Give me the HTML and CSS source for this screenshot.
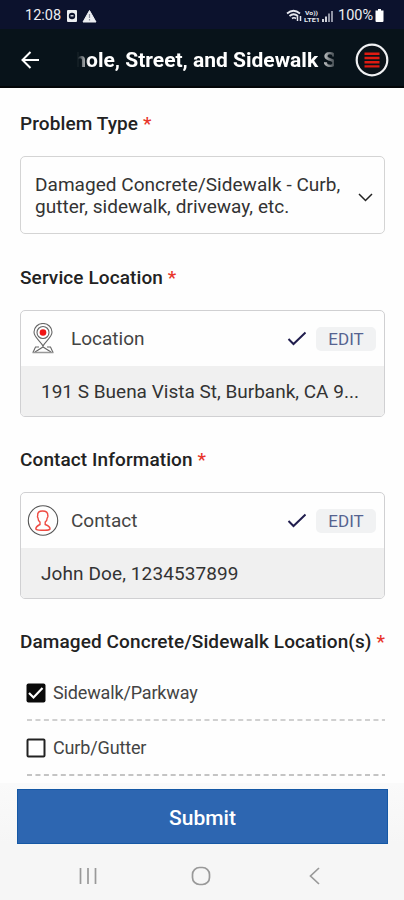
FILE: index.html
```html
<!DOCTYPE html>
<html lang="en">
<head>
  <meta charset="UTF-8" />
  <title>Service Request</title>
  <meta name="viewport" content="width=device-width, initial-scale=1.0" />
  <link rel="stylesheet" href="styles.css">
</head>
<body>
  <div class="status-bar">
    <span class="time">12:08</span>
    <svg class="status-left" width="32" height="14" viewBox="0 0 32 14">
      <rect x="1" y="1" width="10" height="12" rx="1" fill="#eceef2" />
      <circle cx="6" cy="7" r="3.2" fill="#0c122d" />
      <path d="M4.5 6.8h3" stroke="#eceef2" stroke-width="1.3" />
      <path d="M23.5 1.5L30 13H17z" fill="#eceef2" stroke="#eceef2" stroke-linejoin="round" />
      <path d="M23.5 5v4M23.5 10v1.5" stroke="#8d91a0" stroke-width="1.2" />
    </svg>
    <svg class="status-right" width="50" height="14" viewBox="0 0 50 14" fill="none" stroke="#e6e8ee">
      <path d="M1 4.5Q7.5-1 14 4.5M3.5 7Q7.5 3.5 12 7M6 9.5Q8 8 10 9.5" stroke-width="1.7" />
      <path d="M11.5 7v5M14.5 7v5" stroke-width="1.5" />
      <text class="volte" x="19" y="5.5" textLength="13" lengthAdjust="spacingAndGlyphs">Vo))</text>
      <text class="volte" x="18" y="12.5" textLength="16" lengthAdjust="spacingAndGlyphs">LTE1</text>
      <path d="M37 10v3M40 7.5V13" stroke-width="1.8" />
      <path d="M43 4.5V13M46 2v11" stroke-width="1.8" stroke="#9fa3b2" />
    </svg>
    <span class="battery-text">100%</span>
    <svg class="battery" width="9" height="13" viewBox="0 0 9 13">
      <path d="M3 0h3v1.5h2.5V12q0 1-1 1h-6q-1 0-1-1V1.5H3z" fill="#fff" />
    </svg>
  </div>

  <header class="toolbar">
    <svg class="back" width="18" height="18" viewBox="0 0 18 18" fill="none" stroke="#fff" stroke-width="2">
      <path d="M18 9H1.5M9.500 1L1.500 9l8 8" />
    </svg>
    <div class="title-wrap">
      <h1>Pothole, Street, and Sidewalk Service</h1>
    </div>
    <svg class="menu" width="34" height="34" viewBox="0 0 34 34">
      <circle cx="17" cy="17" r="15.3" fill="#0b1319" stroke="#f0f1f3" stroke-width="2.2" />
      <path d="M9.500 10.800h15M9.500 15h15M9.500 19.200h15M9.500 23.400h15" stroke="#e01b12" stroke-width="2.4" />
    </svg>
  </header>

  <main>
    <h2>Problem Type <span class="required">*</span></h2>
    <div class="select">
      <div class="select-value">Damaged Concrete/Sidewalk - Curb,<br>gutter, sidewalk, driveway, etc.</div>
      <svg width="15" height="9" viewBox="0 0 15 9" fill="none" stroke="#222" stroke-width="1.5">
        <path d="M1 1l6.500 6.500L14 1" />
      </svg>
    </div>

    <h2>Service Location <span class="required">*</span></h2>
    <section class="card">
      <div class="card-head">
        <svg class="card-icon" width="32" height="32" viewBox="0 0 32 32" fill="none" stroke="#666" stroke-width="1.1">
          <path d="M16 23C14 18.500 7 14.500 7 9a9 8.500 0 0 1 18 0C25 14.500 18 18.500 16 23z" />
          <circle cx="16" cy="9.500" r="6" />
          <circle cx="16" cy="9.500" r="3.300" fill="#f01414" stroke="none" />
          <path d="M12 24H8.500L6 29.500M20 24h3.500L26 29.500M8 29l8-5 8 5" />
          <path d="M5.500 29.500h21" stroke="#999" stroke-width="1.6" />
        </svg>
        <span class="card-title">Location</span>
        <svg class="check" width="20" height="15" viewBox="0 0 20 15" fill="none" stroke="#211e4e" stroke-width="2">
          <path d="M1.500 8l5 5L18.500 1.500" />
        </svg>
        <button type="button">EDIT</button>
      </div>
      <div class="card-body">191 S Buena Vista St, Burbank, CA 9...</div>
    </section>

    <h2>Contact Information <span class="required">*</span></h2>
    <section class="card">
      <div class="card-head">
        <svg class="card-icon" width="32" height="32" viewBox="0 0 32 32" fill="none">
          <circle cx="16" cy="15.500" r="14.700" stroke="#555" stroke-width="1.1" />
          <path d="M13 17C11.500 16 11 14.500 11 13c-1-1-.5-2-.3-2.500C10.300 7.500 12 6 15.500 6c3.800 0 5.500 1.500 5.300 4.500.3 1 .3 2-.6 2.500 0 1.500-.7 3-2 4v2.500c3 1.200 5 1.800 4.800 4.500-1 1.500-3.500 1.200-7 1.200s-6.500.3-7.200-1.200C8.800 21.300 10.500 20.700 13 19.500z" stroke="#ee4a42" stroke-width="1.4" />
        </svg>
        <span class="card-title">Contact</span>
        <svg class="check" width="20" height="15" viewBox="0 0 20 15" fill="none" stroke="#211e4e" stroke-width="2">
          <path d="M1.500 8l5 5L18.500 1.500" />
        </svg>
        <button type="button">EDIT</button>
      </div>
      <div class="card-body person">John Doe, 1234537899</div>
    </section>

    <h2 class="damage-label">Damaged Concrete/Sidewalk Location(s) <span class="required">*</span></h2>
    <div class="option">
      <svg width="20" height="20" viewBox="0 0 20 20">
        <rect x="0.5" y="0.5" width="19" height="19" rx="2" fill="#0a0a0a" />
        <path d="M3 10l4.500 4.500L16.500 5" fill="none" stroke="#fff" stroke-width="2.2" />
      </svg>
      <span>Sidewalk/Parkway</span>
    </div>
    <svg class="dashes" width="358" height="2"><path d="M0 1h358" stroke="#d0d0d0" stroke-width="2" stroke-dasharray="5 3.450" /></svg>
    <div class="option">
      <svg width="20" height="20" viewBox="0 0 20 20">
        <rect x="1.500" y="1.500" width="17" height="17" rx="1" fill="#fff" stroke="#222" stroke-width="2" />
      </svg>
      <span>Curb/Gutter</span>
    </div>
    <svg class="dashes" width="358" height="2"><path d="M0 1h358" stroke="#c4c4c4" stroke-width="2" stroke-dasharray="5 3.450" /></svg>
  </main>

  <footer>
    <button type="button" class="submit">Submit</button>
    <nav>
      <svg width="18" height="18" viewBox="0 0 18 18" stroke="#999" stroke-width="1.7">
        <path d="M1.500 1v16M9 1v16M16.500 1v16" />
      </svg>
      <svg class="home" width="20" height="20" viewBox="0 0 20 20" fill="none" stroke="#999" stroke-width="1.7">
        <rect x="1.500" y="1.500" width="17" height="17" rx="7" />
      </svg>
      <svg width="11" height="18" viewBox="0 0 11 18" fill="none" stroke="#999" stroke-width="1.7">
        <path d="M10 1L1.500 9l8.500 8" />
      </svg>
    </nav>
  </footer>
</body>
</html>
```

FILE: styles.css
```css
* {
  box-sizing: border-box;
}

body {
  margin: 0;
  height: 900px;
  display: flex;
  flex-direction: column;
  overflow: hidden;
  font-family: Roboto, "Liberation Sans", sans-serif;
  background-color: #fefefe;
  color: #222;
}

svg {
  display: block;
  flex-shrink: 0;
}

.status-bar {
  height: 29px;
  flex-shrink: 0;
  display: flex;
  align-items: center;
  padding: 2px 20px 0 25px;
  background-color: #0c122d;
  color: #eceef2;
  font-size: 14.5px;
}

.time {
  width: 36px;
}

.status-left {
  margin-left: 5px;
}

.status-right {
  margin-left: auto;
}

.volte {
  font-size: 5.5px;
  font-weight: 700;
  fill: #e6e8ee;
  stroke: none;
}

.battery-text {
  width: 36px;
  margin-left: 2px;
}

.battery {
  margin-left: 1px;
}

.toolbar {
  height: 59px;
  flex-shrink: 0;
  display: flex;
  align-items: center;
  padding: 4px 15px 0 21px;
  background-color: #08131a;
  border-bottom: 2px solid #030608;
  color: #fff;
}

.title-wrap {
  width: 257px;
  margin-left: 38px;
  overflow: hidden;
  display: flex;
  mask-image: linear-gradient(to right, transparent, #000 12px, #000 242px, transparent 262px);
}

h1 {
  margin: 0 0 0 -35px;
  font-size: 21px;
  line-height: 30px;
  font-weight: 700;
  white-space: nowrap;
}

.menu {
  margin-left: auto;
}

main {
  flex: 1;
  padding: 24px 18px 0 20px;
}

h2 {
  margin: 0;
  font-size: 19px;
  font-weight: 500;
  line-height: 24px;
  letter-spacing: 0.1px;
  white-space: nowrap;
}

.required {
  color: #e8352b;
}

.select {
  height: 78px;
  width: 365px;
  margin: 20px 0 32px;
  padding: 0 11px 0 14px;
  display: flex;
  align-items: center;
  justify-content: space-between;
  border: 1px solid #d4d4d4;
  border-radius: 5px;
  color: #333;
  font-size: 19px;
  line-height: 22px;
  letter-spacing: 0.04px;
  white-space: nowrap;
}

.select-value {
  padding-top: 2px;
}

.select svg {
  margin-top: 4px;
}

.card {
  width: 365px;
  height: 107px;
  margin: 20px 0 31px;
  border: 1px solid #d0d0d2;
  border-radius: 5px;
  overflow: hidden;
}

.card-head {
  height: 55px;
  display: flex;
  align-items: center;
  padding: 0 8px 0 6px;
}

.card-title {
  margin-left: 12px;
  color: #444;
  font-size: 19px;
}

.check {
  margin-left: auto;
}

.card-head button {
  width: 60px;
  height: 24px;
  margin-left: 9px;
  padding: 0;
  border: none;
  border-radius: 5px;
  background-color: #f1f2f3;
  color: #566390;
  font-family: inherit;
  font-size: 17px;
}

.card-body {
  height: 51px;
  padding-left: 20px;
  background-color: #f0f0f0;
  color: #333;
  font-size: 19px;
  line-height: 51px;
  white-space: nowrap;
}

.person {
  letter-spacing: 0.1px;
}

.option {
  height: 53px;
  display: flex;
  align-items: center;
  padding-left: 6px;
  color: #444;
  font-size: 18px;
  letter-spacing: -0.15px;
}

.option span {
  margin-left: 7px;
}

.damage-label {
  margin-bottom: 12px;
}

.dashes {
  margin-left: 7px;
}

footer {
  height: 117px;
  flex-shrink: 0;
  padding: 6px 17px 0;
  background: linear-gradient(#fafafa, #f6f6f6 60px);
}

.submit {
  display: block;
  width: 371px;
  height: 55px;
  padding: 2px 0 0;
  border: 1px solid #1558a5;
  background-color: #2d66b1;
  color: #fff;
  font-family: inherit;
  font-size: 21px;
  font-weight: 500;
}

nav {
  display: flex;
  align-items: center;
  justify-content: space-between;
  padding: 22px 67px 0 62px;
}

.home {
  margin-right: 4px;
}
```
